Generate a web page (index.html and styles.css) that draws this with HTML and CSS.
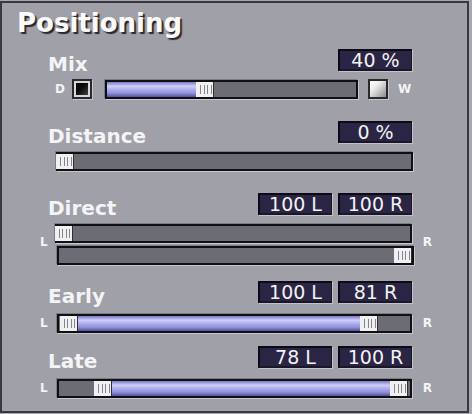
FILE: index.html
```html
<!DOCTYPE html>
<html>
<head>
<meta charset="utf-8">
<link rel="stylesheet" href="styles.css">
</head>
<body>
<div class="panel">
  <div class="title">Positioning</div>
  <div class="content">
    <div class="head mt-mix">
      <span class="label">Mix</span>
      <div class="values"><span class="val">40 %</span></div>
    </div>
    <div class="mixrow">
      <span class="tiny tiny-d">D</span>
      <span class="btn btn-dry"></span>
      <div class="slider mix-slider">
        <span class="fill" style="left:0;width:89px"></span>
        <span class="knob" style="left:89px"></span>
      </div>
      <span class="btn btn-wet"></span>
      <span class="tiny tiny-w">W</span>
    </div>

    <div class="head mt-dist">
      <span class="label">Distance</span>
      <div class="values"><span class="val">0 %</span></div>
    </div>
    <div class="slider single mt-slider">
      <span class="knob" style="left:-2px"></span>
    </div>

    <div class="head mt-direct">
      <span class="label">Direct</span>
      <div class="values"><span class="val">100 L</span><span class="val">100 R</span></div>
    </div>
    <div class="lrrow direct-row">
      <span class="tiny side-l">L</span>
      <div class="stack">
        <div class="slider d1">
          <span class="knob" style="left:-2px"></span>
        </div>
        <div class="slider d2">
          <span class="knob" style="left:335px"></span>
        </div>
      </div>
      <span class="tiny side-r">R</span>
    </div>

    <div class="head mt-early">
      <span class="label">Early</span>
      <div class="values"><span class="val">100 L</span><span class="val">81 R</span></div>
    </div>
    <div class="lrrow range-row">
      <span class="tiny side-l2">L</span>
      <div class="slider range">
        <span class="fill" style="left:19px;width:282px"></span>
        <span class="knob" style="left:1px"></span>
        <span class="knob" style="left:301px"></span>
      </div>
      <span class="tiny side-r2">R</span>
    </div>

    <div class="head mt-late">
      <span class="label">Late</span>
      <div class="values"><span class="val">78 L</span><span class="val">100 R</span></div>
    </div>
    <div class="lrrow range-row">
      <span class="tiny side-l2">L</span>
      <div class="slider range">
        <span class="fill" style="left:53px;width:278px"></span>
        <span class="knob" style="left:35px"></span>
        <span class="knob" style="left:331px"></span>
      </div>
      <span class="tiny side-r2">R</span>
    </div>
  </div>
</div>
</body>
</html>
```

FILE: styles.css
```css
html, body {
  margin: 0;
  padding: 0;
}
body {
  background: #a8a8b0;
  width: 472px;
  height: 414px;
  overflow: hidden;
  font-family: "DejaVu Sans", Verdana, sans-serif;
}
.panel {
  margin-top: 1px;
  width: 469px;
  height: 412px;
  box-sizing: border-box;
  border: 2px solid #38383e;
  background: #a0a0a8;
}
.title {
  padding: 4px 0 0 15px;
  height: 30px;
  line-height: 32px;
  font-size: 26px;
  font-weight: bold;
  color: #fafafa;
  text-shadow: 2px 2px 1px #28282c;
}
.content {
  margin-left: 38px;
  width: 392px;
}
.head {
  display: flex;
  height: 22px;
  align-items: flex-start;
}
.label {
  margin-left: 8px;
  font-size: 20px;
  font-weight: bold;
  line-height: 30px;
  height: 22px;
  color: #f4f4f6;
}
.values {
  margin-left: auto;
  margin-right: 20px;
  display: flex;
  gap: 6px;
}
.val {
  width: 74px;
  height: 22px;
  box-sizing: border-box;
  background: #2b2545;
  border-top: 2px solid #0c0a16;
  border-left: 2px solid #0c0a16;
  border-right: 1px solid #1a1628;
  border-bottom: 2px solid #1a1628;
  box-shadow: 1px 1px 0 #c2c2ca;
  color: #f2f2f2;
  font-size: 19px;
  line-height: 18px;
  text-align: center;
}
.mt-mix { margin-top: 12px; }
.mt-dist { margin-top: 22px; }
.mt-direct { margin-top: 22px; }
.mt-early { margin-top: 16px; }
.mt-late { margin-top: 13px; }

.tiny {
  font-size: 12px;
  font-weight: bold;
  color: #f4f4f6;
  line-height: 20px;
}
.mixrow {
  display: flex;
  align-items: flex-start;
  height: 20px;
  margin-top: 8px;
}
.tiny-d {
  margin-left: 15px;
  width: 17px;
}
.btn {
  width: 20px;
  height: 20px;
  box-sizing: border-box;
  border: 2px solid #2a2a2e;
  box-shadow: 1px 1px 0 #c4c4cc;
}
.btn-dry {
  background: linear-gradient(135deg, #000 0%, #0a0a0a 45%, #505050 100%);
  box-shadow: inset 0 0 0 2px #d6d6da, 1px 1px 0 #c4c4cc;
}
.btn-wet {
  margin-left: 10px;
  background: linear-gradient(135deg, #ffffff 0%, #ececec 35%, #8c8c8c 100%);
}
.tiny-w {
  margin-left: 10px;
}

.slider {
  position: relative;
  height: 19px;
  box-sizing: border-box;
  border: 2px solid #101012;
  background: #6c6c74;
  box-shadow: 1px 1px 0 #c6c6ce, -1px -1px 0 #7c7c84;
}
.mix-slider {
  width: 253px;
  margin-left: 13px;
  margin-top: 1px;
}
.single {
  width: 357px;
  margin-left: 16px;
}
.mt-slider { margin-top: 9px; }

.fill {
  position: absolute;
  top: 0;
  bottom: 0;
  background: linear-gradient(to bottom, #7a7ac4 0%, #cfcffa 28%, #aaaaee 52%, #9292dc 74%, #52529a 100%);
}
.knob {
  position: absolute;
  top: 0;
  bottom: 0;
  width: 18px;
  box-sizing: border-box;
  border-right: 1px solid #2e2e34;
  background-color: #f0f0f2;
  background-image: repeating-linear-gradient(to right, #84848c 0 1px, transparent 1px 3.5px);
  background-size: 12px 9px;
  background-position: 4px center;
  background-repeat: no-repeat;
}

.lrrow {
  display: flex;
  align-items: center;
}
.direct-row {
  margin-top: 9px;
}
.side-l {
  width: 16px;
  padding-bottom: 6px;
}
.side-r {
  margin-left: 9px;
  padding-bottom: 6px;
}
.stack {
  display: flex;
  flex-direction: column;
  width: 359px;
}
.d1 {
  width: 357px;
}
.d2 {
  width: 357px;
  margin-left: 2px;
  margin-top: 3px;
}
.range-row {
  margin-top: 10px;
}
.side-l2 {
  width: 17px;
}
.range {
  width: 356px;
}
.side-r2 {
  margin-left: 11px;
}
```
